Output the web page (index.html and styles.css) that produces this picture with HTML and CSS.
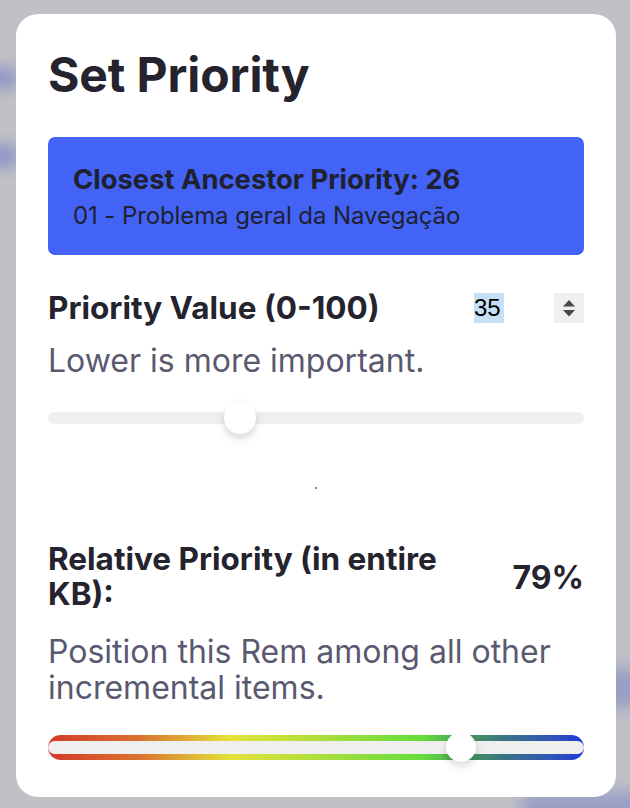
FILE: index.html
```html
<!DOCTYPE html>
<html lang="en">
<head>
<meta charset="utf-8">
<title>Set Priority</title>
<link rel="stylesheet" href="styles.css">
</head>
<body>
<div class="backdrop">
  <div class="blob blob-a"></div>
  <div class="blob blob-b"></div>
  <div class="blob blob-c"></div>
  <div class="blob blob-d"></div>
</div>
<div class="stage">
  <div class="card">
    <h1 class="title">Set Priority</h1>
    <div class="ancestor">
      <div class="ancestor-title">Closest Ancestor Priority: 26</div>
      <div class="ancestor-name">01 - Problema geral da Navegação</div>
    </div>

    <div class="row row-value">
      <div class="label">Priority Value (0-100)</div>
      <div class="number">
        <span class="number-text">35</span>
        <span class="spinner">
          <svg width="16" height="24" viewBox="0 0 16 24"><path d="M8 4 L14 10.5 L2 10.5 Z" fill="#484848"/><path d="M2 14 L14 14 L8 20.5 Z" fill="#484848"/></svg>
        </span>
      </div>
    </div>
    <p class="desc desc-first">Lower is more important.</p>
    <div class="slider">
      <div class="track"></div>
      <div class="thumb thumb-plain" style="left: 35.8%"></div>
    </div>

    <div class="spacer"><span class="dot"></span></div>

    <div class="row row-relative">
      <div class="label label-relative">Relative Priority (in entire KB):</div>
      <div class="percent">79%</div>
    </div>
    <p class="desc desc-second">Position this Rem among all other incremental items.</p>
    <div class="slider slider-grad">
      <div class="grad-track"><div class="grad-inner"></div></div>
      <div class="thumb thumb-grad" style="left: 77%"></div>
    </div>
  </div>
</div>
</body>
</html>
```

FILE: styles.css
```css
* { box-sizing: border-box; }
html, body {
  margin: 0;
  padding: 0;
  width: 630px;
  height: 808px;
  overflow: hidden;
  background: #c1c0c6;
  font-family: Inter, "Noto Sans", sans-serif;
}
.backdrop {
  position: absolute;
  inset: 0;
  overflow: hidden;
}
.blob {
  position: absolute;
  background: #7d88c4;
  filter: blur(8px);
  border-radius: 20px;
  opacity: 0.8;
}
.blob-a { left: -20px; top: 68px; width: 40px; height: 20px; }
.blob-b { left: -20px; top: 145px; width: 40px; height: 22px; }
.blob-c { left: 600px; top: 668px; width: 50px; height: 40px; opacity: 0.6; }
.blob-d { left: 520px; top: 792px; width: 140px; height: 30px; opacity: 0.6; }

.stage {
  position: relative;
  padding: 14px 14px 0 16px;
}
.card {
  background: #ffffff;
  border-radius: 22px;
  height: 783px;
  padding: 31px 32px 0 32px;
  display: flex;
  flex-direction: column;
}
.title {
  margin: 0;
  font-size: 48px;
  line-height: 59px;
  font-weight: 700;
  color: #24232e;
  letter-spacing: -0.1px;
}
.ancestor {
  margin-top: 33px;
  background: #4263f5;
  border-radius: 7px;
  height: 118px;
  padding: 26px 25px 0 25px;
  color: #1f2030;
}
.ancestor-title {
  font-size: 27.4px;
  line-height: 33px;
  font-weight: 700;
}
.ancestor-name {
  margin-top: 5px;
  font-size: 24px;
  line-height: 30px;
  font-weight: 400;
  letter-spacing: -0.1px;
}
.row {
  display: flex;
  align-items: center;
  justify-content: space-between;
}
.row-value {
  margin-top: 35px;
  height: 36px;
}
.label {
  font-size: 31.5px;
  line-height: 36px;
  font-weight: 700;
  color: #24232e;
}
.number {
  width: 110px;
  height: 30px;
  display: flex;
  align-items: center;
  justify-content: space-between;
}
.number-text {
  font-family: "Liberation Sans", Arial, sans-serif;
  font-size: 24px;
  line-height: 30px;
  width: 30px;
  background: #c6e0f5;
  color: #000;
}
.spinner {
  width: 30px;
  height: 30px;
  background: #efefef;
  display: flex;
  align-items: center;
  justify-content: center;
}
.desc {
  margin: 0;
  font-size: 32px;
  line-height: 36px;
  color: #5a596f;
}
.desc-first { margin-top: 17px; }
.slider {
  position: relative;
  height: 32px;
  margin-top: 23px;
  display: flex;
  align-items: center;
}
.track {
  width: 100%;
  height: 12px;
  border-radius: 6px;
  background: #efefef;
}
.thumb {
  position: absolute;
  top: 50%;
  border-radius: 50%;
  background: #ffffff;
  transform: translate(-50%, -50%);
}
.thumb-plain {
  width: 32px;
  height: 32px;
  box-shadow: 0 4px 8px rgba(0, 0, 0, 0.16);
}
.spacer {
  height: 107px;
  display: flex;
  align-items: center;
  justify-content: center;
}
.dot {
  width: 2px;
  height: 2px;
  background: #8a8a8a;
}
.label-relative {
  width: 430px;
  line-height: 35px;
}
.percent {
  font-size: 32px;
  line-height: 36px;
  font-weight: 700;
  color: #24232e;
  margin-top: 4px;
}
.desc-second { margin-top: 23px; }
.slider-grad {
  height: 30px;
  margin-top: 26px;
}
.grad-track {
  width: 100%;
  height: 25px;
  border-radius: 13px;
  background: linear-gradient(90deg, #d4392b 0%, #d9722f 17%, #e5e23b 34%, #a8de3c 52%, #62dd3d 70%, #4a9a5c 78%, #3a7383 85%, #3055b8 94%, #2238d6 100%);
  display: flex;
  align-items: center;
}
.grad-inner {
  width: 100%;
  height: 13px;
  border-radius: 7px;
  background: #efefef;
}
.thumb-grad {
  width: 30px;
  height: 30px;
  box-shadow: 0 4px 8px rgba(0, 0, 0, 0.16);
}
```
